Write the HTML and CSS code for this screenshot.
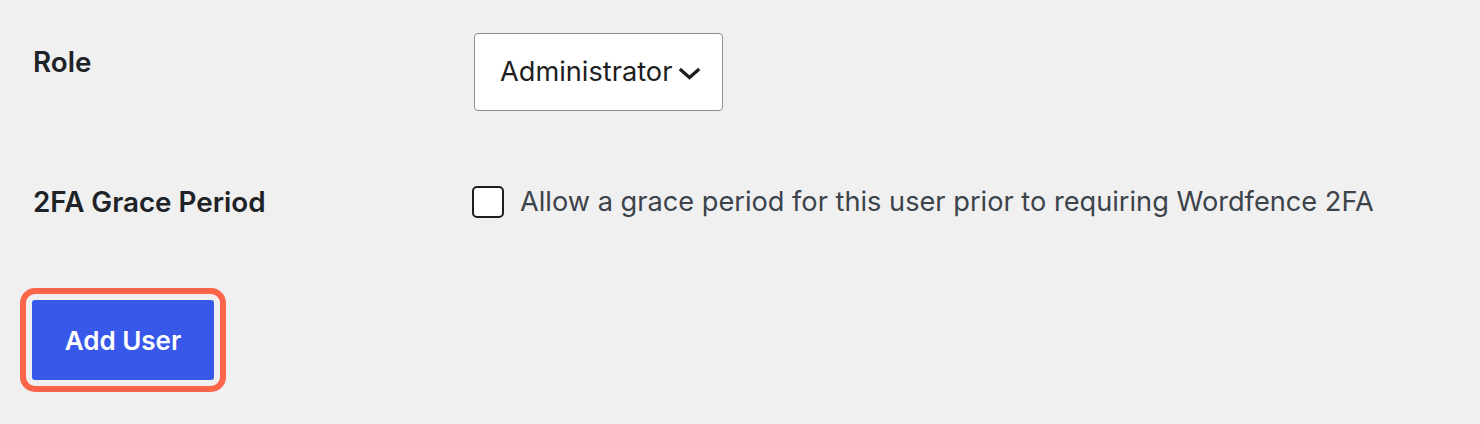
FILE: index.html
```html
<!DOCTYPE html>
<html lang="en">
<head>
<meta charset="utf-8">
<title>Add User</title>
<link rel="stylesheet" href="styles.css">
</head>
<body>
<div class="page">
  <div class="row row-role">
    <div class="label">Role</div>
    <div class="field">
      <div class="select">
        <span class="select-text">Administrator</span>
        <svg class="chev" width="23" height="13" viewBox="0 0 23 13"><polyline points="1.8,2 11.5,10.5 21.2,2" fill="none" stroke="#1e1e1e" stroke-width="3.2"/></svg>
      </div>
    </div>
  </div>
  <div class="row row-grace">
    <div class="label label-grace">2FA Grace Period</div>
    <label class="check-field">
      <span class="checkbox"></span>
      <span class="check-text">Allow a grace period for this user prior to requiring Wordfence 2FA</span>
    </label>
  </div>
  <div class="submit">
    <button class="btn">Add User</button>
  </div>
</div>
</body>
</html>
```

FILE: styles.css
```css
html, body {
  margin: 0;
  padding: 0;
  background: #f0f0f1;
}
body {
  font-family: Inter, "Noto Sans", "Liberation Sans", sans-serif;
  width: 1480px;
  height: 424px;
  overflow: hidden;
}
.page {
  padding: 33px 0 0 33px;
}
.row {
  display: grid;
  grid-template-columns: 439px auto;
  align-items: start;
}
.label {
  font-size: 27.8px;
  line-height: 28px;
  font-weight: 600;
  color: #1d2327;
  margin-top: 15px;
}
.field {
  padding-left: 2px;
}
.select {
  display: inline-flex;
  align-items: center;
  box-sizing: border-box;
  height: 78px;
  padding: 0 21px 0 25px;
  background: #fff;
  border: 1.5px solid #8c8f94;
  border-radius: 4px;
}
.select-text {
  font-size: 27.2px;
  line-height: 28px;
  color: #1e1e1e;
}
.chev {
  margin-left: 6px;
  margin-top: 2px;
  display: block;
}
.row-grace {
  margin-top: 75px;
}
.label-grace {
  margin-top: 2px;
}
.check-field {
  display: flex;
  align-items: flex-start;
}
.checkbox {
  box-sizing: border-box;
  width: 32px;
  height: 32px;
  background: #fff;
  border: 2.5px solid #1e1e1e;
  border-radius: 5px;
  flex: none;
}
.check-text {
  margin-left: 16px;
  margin-top: 2px;
  font-size: 27.2px;
  line-height: 28px;
  color: #3c434a;
}
.submit {
  margin-top: 82px;
  margin-left: -1px;
}
.btn {
  box-sizing: border-box;
  width: 182px;
  height: 80px;
  background: #3858e9;
  border: none;
  border-radius: 3px;
  color: #fff;
  font-family: Inter, "Noto Sans", "Liberation Sans", sans-serif;
  font-size: 26px;
  font-weight: 600;
  outline: 6px solid #fd654a;
  outline-offset: 6px;
  padding: 0;
}
```
